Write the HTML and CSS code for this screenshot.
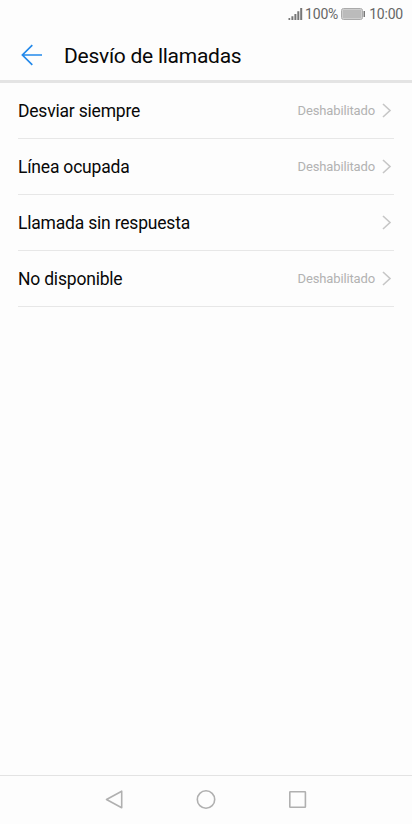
FILE: index.html
```html
<!DOCTYPE html>
<html lang="es">
<head>
<meta charset="utf-8">
<title>Desvío de llamadas</title>
<link rel="stylesheet" href="styles.css">
</head>
<body>
<div class="status">
<svg class="signal" width="15" height="14" viewBox="0 0 15 14"><path d="M.5 11h1.7v2H.5zM3.4 9.3h2v3.7h-2zM6.4 7h2v6h-2zM9.3 4.2h2V13h-2zM12.2 1h2v12h-2z" fill="#777"/></svg>
<span class="percent">100%</span>
<svg class="battery" width="25" height="12" viewBox="0 0 25 12"><rect x=".5" y=".5" width="21" height="11" rx="2" fill="#e0e0e0" stroke="#aaa"/><rect x="1.5" y="1.5" width="19" height="9" rx=".5" fill="#bbb"/><path d="M22.5 3H24v6h-1.5z" fill="#777"/></svg>
<span class="time">10:00</span>
</div>
<header class="header">
<svg class="back" width="22" height="22" viewBox="0 0 22 22" fill="none" stroke="#2389ea" stroke-width="1.7"><path d="M11.3 1.2 1.4 11l9.9 9.8M1.4 11H21"/></svg>
<h1 class="title">Desvío de llamadas</h1>
</header>
<main class="list">
<div class="row"><span class="label">Desviar siempre</span><span class="value">Deshabilitado</span><svg class="chevron" width="10" height="16" viewBox="0 0 10 16"><path d="M1 1 8 7.5 1 14"/></svg></div>
<div class="row"><span class="label">Línea ocupada</span><span class="value">Deshabilitado</span><svg class="chevron" width="10" height="16" viewBox="0 0 10 16"><path d="M1 1 8 7.5 1 14"/></svg></div>
<div class="row"><span class="label">Llamada sin respuesta</span><svg class="chevron" width="10" height="16" viewBox="0 0 10 16"><path d="M1 1 8 7.5 1 14"/></svg></div>
<div class="row"><span class="label">No disponible</span><span class="value">Deshabilitado</span><svg class="chevron" width="10" height="16" viewBox="0 0 10 16"><path d="M1 1 8 7.5 1 14"/></svg></div>
</main>
<nav class="nav">
<svg width="20" height="20" viewBox="0 0 20 20"><path d="M17.7 1.2v16.6L2.5 9.5z"/></svg>
<svg width="20" height="20" viewBox="0 0 20 20"><circle cx="10" cy="9.5" r="8.7"/></svg>
<svg width="20" height="20" viewBox="0 0 20 20"><rect x="1.8" y="1.7" width="15.6" height="15.6" rx=".5"/></svg>
</nav>
</body>
</html>
```
FILE: styles.css
```css
* { box-sizing: border-box; }
body {
  margin: 0;
  height: 824px;
  display: flex;
  flex-direction: column;
  background: #fdfdfd;
  color: #080808;
  font-family: Roboto, "Liberation Sans", sans-serif;
}
svg { display: block; flex: none; }
.status {
  height: 28px;
  padding-right: 9px;
  display: flex;
  align-items: center;
  justify-content: flex-end;
  font-size: 14px;
  letter-spacing: -0.2px;
  color: #666;
}
.percent { margin: 0 3px 0 2px; }
.time { margin-left: 3px; }
.header {
  height: 55px;
  padding: 1px 0 0 21px;
  display: flex;
  align-items: center;
  border-bottom: 3px solid #e4e4e4;
}
.title {
  margin: 3px 0 0 21px;
  font-size: 21px;
  letter-spacing: -0.26px;
  font-weight: 400;
}
.list { flex: 1; padding: 0 18px; }
.row {
  height: 56px;
  display: flex;
  align-items: center;
  border-bottom: 1px solid #e7e7e7;
}
.label { flex: 1; font-size: 17.5px; letter-spacing: -0.2px; }
.value { margin-right: 7px; font-size: 13px; letter-spacing: -0.14px; color: #b2b2b2; }
.chevron {
  margin-right: 2px;
  fill: none;
  stroke: #c6c6c6;
  stroke-width: 1.6;
}
.nav {
  height: 49px;
  display: flex;
  align-items: center;
  justify-content: center;
  gap: 72px;
  border-top: 1px solid #e3e3e3;
}
.nav svg {
  fill: none;
  stroke: #b0b0b0;
  stroke-width: 1.6;
  stroke-linejoin: round;
}
```
